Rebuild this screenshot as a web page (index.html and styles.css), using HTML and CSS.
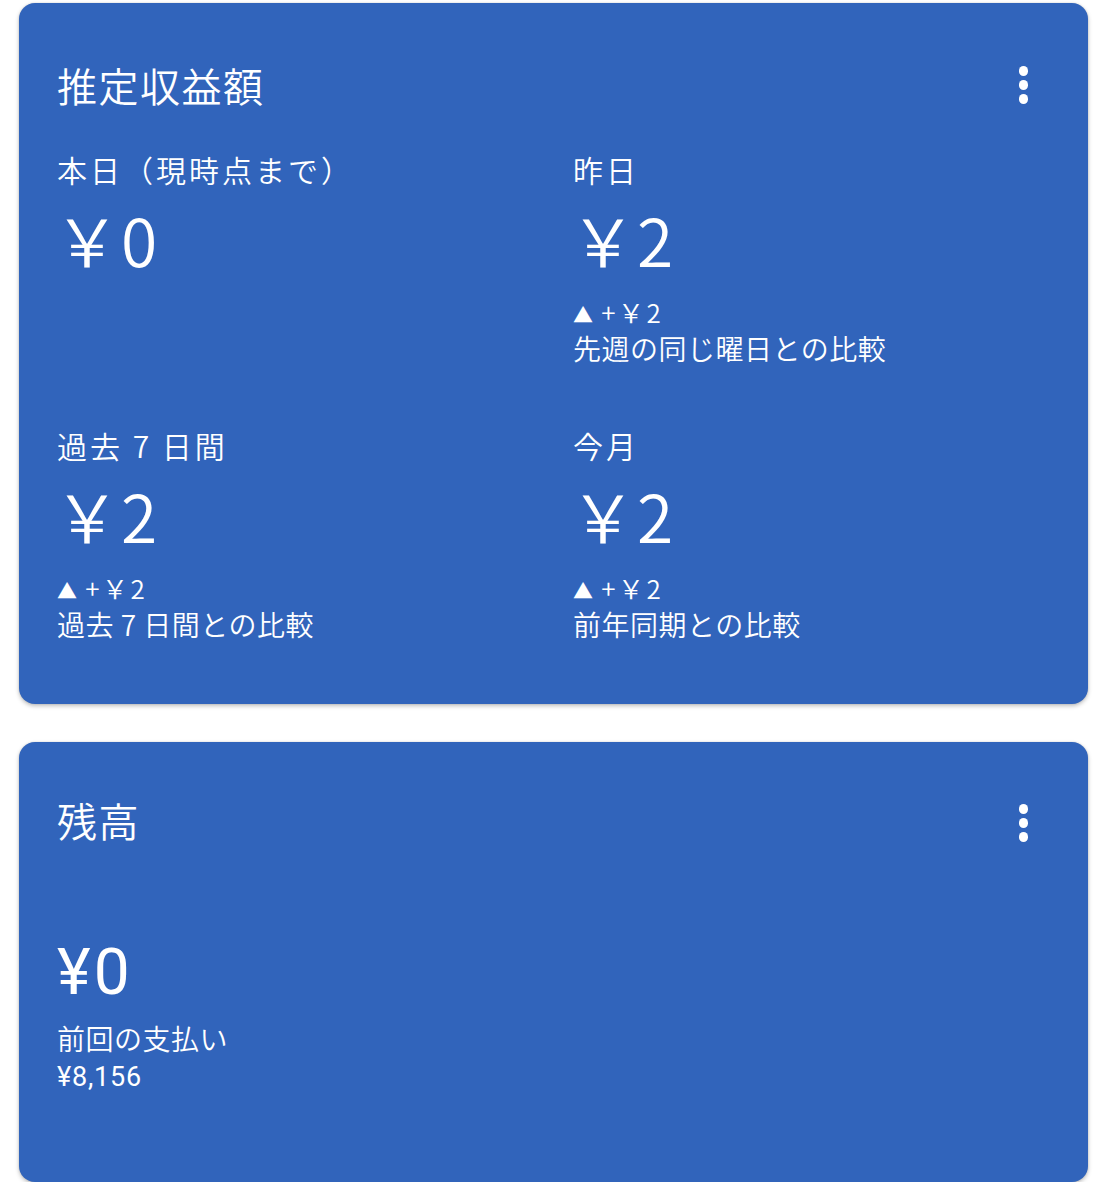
FILE: index.html
```html
<!DOCTYPE html>
<html lang="ja">
<head>
<meta charset="utf-8">
<link rel="stylesheet" href="styles.css">
</head>
<body>
<section class="card card-earn">
  <div class="card-head">
    <h2 class="title">推定収益額</h2>
    <span class="more"><i></i><i></i><i></i></span>
  </div>
  <div class="grid">
    <div class="cell">
      <div class="label">本日（現時点まで）</div>
      <div class="amount">￥0</div>
    </div>
    <div class="cell">
      <div class="label">昨日</div>
      <div class="amount">￥2</div>
      <div class="delta"><span class="tri">▲</span> +￥2</div>
      <div class="cmp">先週の同じ曜日との比較</div>
    </div>
    <div class="cell">
      <div class="label">過去 7 日間</div>
      <div class="amount">￥2</div>
      <div class="delta"><span class="tri">▲</span> +￥2</div>
      <div class="cmp">過去 7 日間との比較</div>
    </div>
    <div class="cell">
      <div class="label">今月</div>
      <div class="amount">￥2</div>
      <div class="delta"><span class="tri">▲</span> +￥2</div>
      <div class="cmp">前年同期との比較</div>
    </div>
  </div>
</section>
<section class="card card-balance">
  <div class="card-head">
    <h2 class="title">残高</h2>
    <span class="more"><i></i><i></i><i></i></span>
  </div>
  <div class="balance">¥0</div>
  <div class="cmp">前回の支払い</div>
  <div class="cmp">¥8,156</div>
</section>
</body>
</html>
```
FILE: styles.css
```css
html, body {
  margin: 0;
  background: #ffffff;
}
body {
  padding: 3px 19px 0;
  font-family: Roboto, "Noto Sans CJK JP", sans-serif;
  color: #ffffff;
}
.card {
  background: #3164bb;
  border-radius: 16px;
  box-shadow: 0 2px 4px rgba(0, 0, 0, 0.25), 0 0 2px rgba(0, 0, 0, 0.12);
  padding: 50px 38px 61px;
}
.card-balance {
  margin-top: 38px;
  padding: 46px 38px 85px;
}
.card-head {
  display: flex;
  align-items: center;
  justify-content: space-between;
  height: 64px;
}
.title {
  margin: 0;
  font-weight: 350;
  font-size: 40px;
  letter-spacing: 1.5px;
  line-height: 56px;
  font-family: "Noto Sans CJK JP", sans-serif;
}
.more {
  display: flex;
  flex-direction: column;
  align-items: center;
  gap: 4.5px;
  margin-right: 22px;
}
.card-balance .more {
  margin-top: 6px;
}
.more i {
  display: block;
  width: 9.5px;
  height: 9.5px;
  border-radius: 50%;
  background: #ffffff;
}
.grid {
  display: grid;
  grid-template-columns: 1fr 1fr;
  column-gap: 39px;
  row-gap: 58px;
  margin-top: 32px;
}
.label {
  font-family: "Noto Sans CJK JP", sans-serif;
  font-weight: 350;
  font-size: 30px;
  letter-spacing: 3px;
  line-height: 40px;
}
.amount {
  margin-top: 14px;
  margin-left: -3px;
  font-family: "Noto Sans CJK JP", sans-serif;
  font-weight: 350;
  font-size: 66px;
  letter-spacing: 1px;
  line-height: 70px;
}
.delta {
  margin-top: 21px;
  font-family: "Noto Sans CJK JP", sans-serif;
  font-weight: 350;
  font-size: 26px;
  letter-spacing: 2.5px;
  line-height: 36px;
}
.tri {
  font-size: 20px;
  line-height: 0;
  letter-spacing: 0;
}
.cmp {
  font-family: "Noto Sans CJK JP", sans-serif;
  font-weight: 350;
  font-size: 28px;
  letter-spacing: 0.5px;
  line-height: 37px;
}
.balance {
  margin-top: 83px;
  font-family: Roboto, sans-serif;
  font-size: 64px;
  letter-spacing: 3px;
  line-height: 76px;
  margin-bottom: 8px;
}
.card-balance .cmp {
  font-size: 28px;
  line-height: 38px;
}
.card-balance .cmp:last-child {
  font-family: Roboto, sans-serif;
  font-weight: 400;
  font-size: 27px;
  letter-spacing: 0.8px;
  line-height: 40px;
}
```
